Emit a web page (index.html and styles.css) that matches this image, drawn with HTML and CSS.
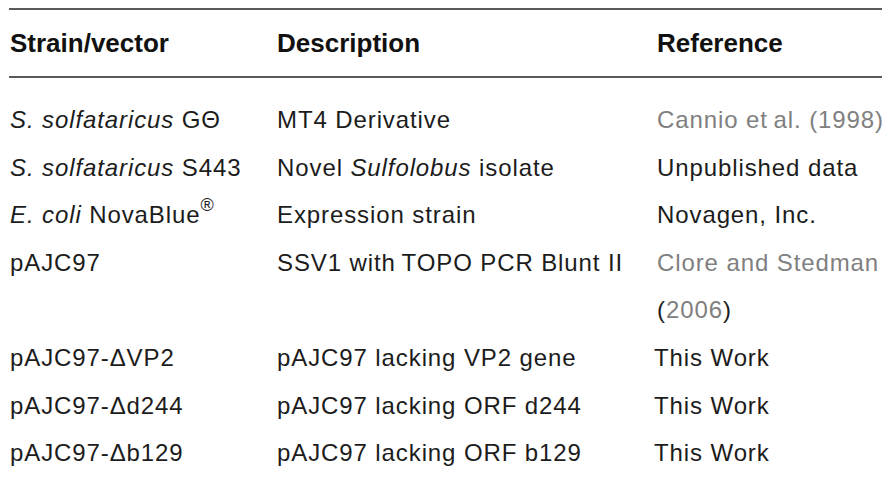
FILE: index.html
```html
<!DOCTYPE html>
<html>
<head>
<meta charset="utf-8">
<link rel="stylesheet" href="styles.css">
</head>
<body>
<table class="tbl">
  <colgroup>
    <col class="w1">
    <col class="w2">
    <col class="w3">
  </colgroup>
  <thead>
    <tr>
      <th>Strain/vector</th>
      <th>Description</th>
      <th>Reference</th>
    </tr>
  </thead>
  <tbody>
    <tr class="first">
      <td><i>S. solfataricus</i> GΘ</td>
      <td>MT4 Derivative</td>
      <td class="ref">Cannio et&#8201;al. (1998)</td>
    </tr>
    <tr>
      <td><i>S. solfataricus</i> S443</td>
      <td>Novel <i>Sulfolobus</i> isolate</td>
      <td>Unpublished data</td>
    </tr>
    <tr>
      <td><i>E. coli</i> NovaBlue<sup class="reg">®</sup></td>
      <td>Expression strain</td>
      <td>Novagen, Inc.</td>
    </tr>
    <tr>
      <td>pAJC97</td>
      <td>SSV1 with&#8201;TOPO PCR Blunt II</td>
      <td><span class="ref">Clore and Stedman</span><br>(<span class="ref">2006</span>)</td>
    </tr>
    <tr>
      <td>pAJC97-ΔVP2</td>
      <td>pAJC97 lacking VP2 gene</td>
      <td class="tw">This Work</td>
    </tr>
    <tr>
      <td>pAJC97-Δd244</td>
      <td>pAJC97 lacking ORF d244</td>
      <td class="tw">This Work</td>
    </tr>
    <tr>
      <td>pAJC97-Δb129</td>
      <td>pAJC97 lacking ORF b129</td>
      <td class="tw">This Work</td>
    </tr>
  </tbody>
</table>
</body>
</html>
```

FILE: styles.css
```css
html, body {
  margin: 0;
  padding: 0;
  background: #ffffff;
}

body {
  padding: 8px 0 0 9px;
  font-family: "Liberation Sans", Arial, sans-serif;
  color: #1c1c1c;
}

.tbl {
  width: 873px;
  table-layout: fixed;
  border-collapse: collapse;
  border-top: 2px solid #5a5a5a;
  font-size: 24px;
  letter-spacing: 0.9px;
}

.w1 { width: 268px; }
.w2 { width: 380px; }
.w3 { width: 225px; }

.tbl th {
  text-align: left;
  font-weight: bold;
  font-size: 26px;
  letter-spacing: 0;
  color: #111;
  height: 66px;
  padding: 0;
  border-bottom: 2px solid #5a5a5a;
  vertical-align: middle;
}

.tbl td {
  padding: 0;
  height: 47.6px;
  line-height: 47.6px;
  vertical-align: top;
  white-space: nowrap;
  font-weight: 300;
}

.tbl tr.first td {
  padding-top: 18px;
}

.tbl th:first-child,
.tbl td:first-child { padding-left: 1px; }

.ref { color: #808080; }

.reg {
  font-size: 0.75em;
  line-height: 0;
  vertical-align: 0.65em;
  letter-spacing: 0;
}

.tw { position: relative; left: -3px; }
```
